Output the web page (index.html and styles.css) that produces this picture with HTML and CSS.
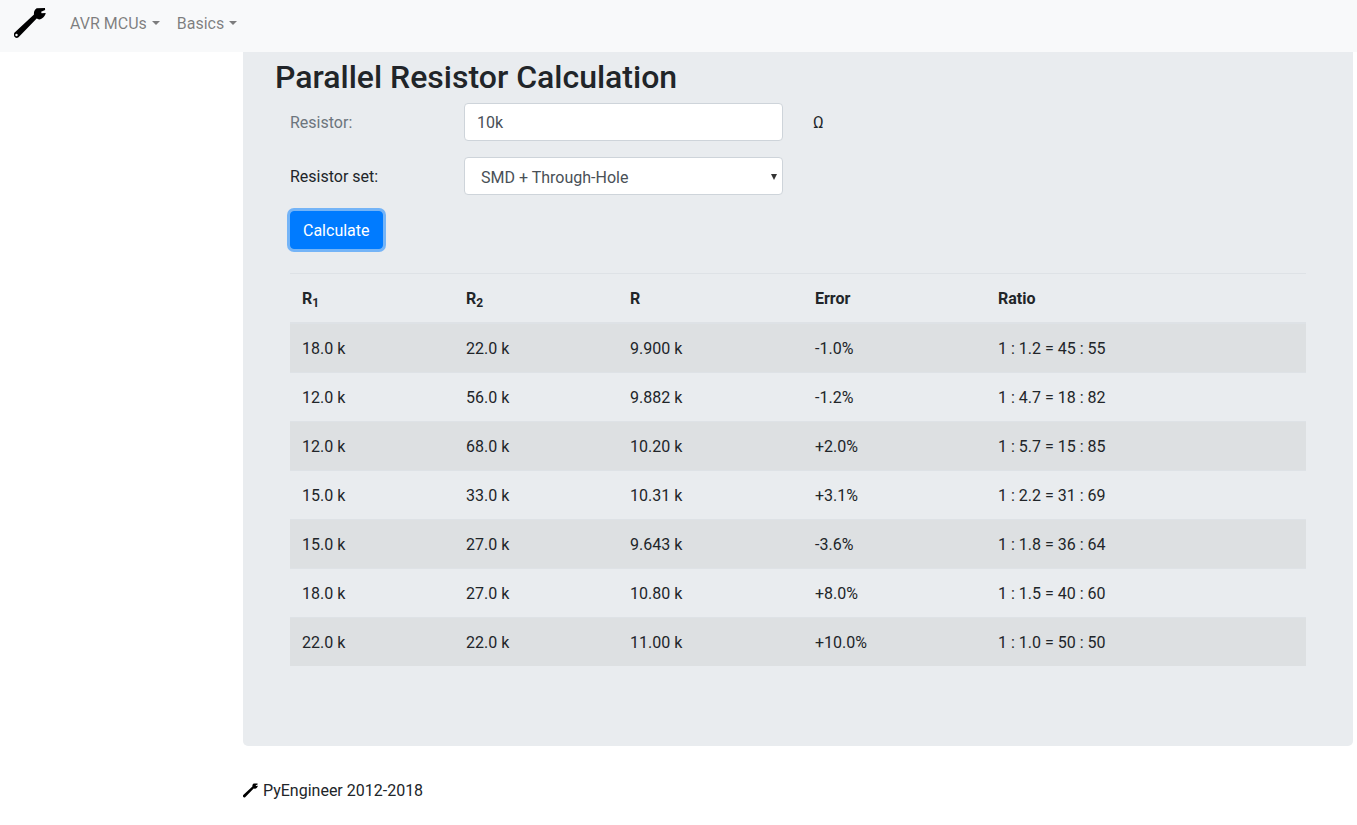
FILE: index.html
```html
<!DOCTYPE html>
<html>
<head>
    <meta charset="utf-8">
    <title>Parallel Resistor Calculation</title>
    <link rel="stylesheet" href="styles.css">
</head>
<body>
    <nav class="navbar">
        <a class="brand" href="#">
            <svg class="wrench" viewBox="0 0 34 32" width="34" height="32">
                <path class="wrench-fill" fill-rule="evenodd" d="M.4 25.700 20 7.600c-.4-2.600.6-5 2.700-6.300L31 1l.1 2-4 1.700.5 1.500 4.100-.2c-.5 3.100-3.200 6-6.600 6.500l-2.400-1L4.500 30.200C3.600 31 2.400 31.200 1.300 30.600-.2 29.700-.5 27 .4 25.700ZM2.500 29.200a1.200 1.200 0 1 0 0-2.400 1.200 1.200 0 0 0 0 2.400Z"/>
            </svg>
        </a>
        <ul class="nav-list">
            <li><a class="nav-link" href="#">AVR MCUs<span class="caret"></span></a></li>
            <li><a class="nav-link" href="#">Basics<span class="caret"></span></a></li>
        </ul>
    </nav>

    <main class="jumbotron">
        <h2>Parallel Resistor Calculation</h2>

        <form class="calc-form">
            <div class="form-row">
                <label class="muted" for="resistor">Resistor:</label>
                <input type="text" id="resistor" class="form-control" value="10k">
                <span class="unit">Ω</span>
            </div>
            <div class="form-row">
                <label for="resistor-set">Resistor set:</label>
                <div class="select-box" id="resistor-set">SMD + Through-Hole<span class="select-arrow"></span></div>
            </div>
            <button type="button" class="btn">Calculate</button>
        </form>

        <table>
            <thead>
                <tr>
                    <th class="col-1">R<sub>1</sub></th>
                    <th class="col-2">R<sub>2</sub></th>
                    <th class="col-3">R</th>
                    <th class="col-4">Error</th>
                    <th>Ratio</th>
                </tr>
            </thead>
            <tbody>
                <tr><td>18.0 k</td><td>22.0 k</td><td>9.900 k</td><td>-1.0%</td><td>1 : 1.2 = 45 : 55</td></tr>
                <tr><td>12.0 k</td><td>56.0 k</td><td>9.882 k</td><td>-1.2%</td><td>1 : 4.7 = 18 : 82</td></tr>
                <tr><td>12.0 k</td><td>68.0 k</td><td>10.20 k</td><td>+2.0%</td><td>1 : 5.7 = 15 : 85</td></tr>
                <tr><td>15.0 k</td><td>33.0 k</td><td>10.31 k</td><td>+3.1%</td><td>1 : 2.2 = 31 : 69</td></tr>
                <tr><td>15.0 k</td><td>27.0 k</td><td>9.643 k</td><td>-3.6%</td><td>1 : 1.8 = 36 : 64</td></tr>
                <tr><td>18.0 k</td><td>27.0 k</td><td>10.80 k</td><td>+8.0%</td><td>1 : 1.5 = 40 : 60</td></tr>
                <tr><td>22.0 k</td><td>22.0 k</td><td>11.00 k</td><td>+10.0%</td><td>1 : 1.0 = 50 : 50</td></tr>
            </tbody>
        </table>
    </main>

    <footer class="footer">
        <svg class="wrench" viewBox="0 0 34 32" width="16" height="15">
            <path class="wrench-fill" d="M.4 25.700 20 7.600c-.4-2.600.6-5 2.700-6.300L31 1l.1 2-4 1.700.5 1.500 4.100-.2c-.5 3.100-3.200 6-6.600 6.500l-2.400-1L4.500 30.200C3.600 31 2.400 31.200 1.300 30.600-.2 29.700-.5 27 .4 25.700Z"/>
        </svg>
        PyEngineer 2012-2018
    </footer>
</body>
</html>
```

FILE: styles.css
```css
* {
    box-sizing: border-box;
}

body {
    margin: 0;
    font-family: Roboto, "Liberation Sans", sans-serif;
    font-size: 16px;
    line-height: 1.5;
    color: #212529;
    background-color: #fff;
}

a {
    text-decoration: none;
}

/* navbar */
.navbar {
    display: flex;
    align-items: center;
    height: 52px;
    padding: 0 16px 4px 14px;
    background-color: #f8f9fa;
}

.brand {
    display: flex;
    margin-right: 14px;
    margin-top: -2px;
}

.wrench-fill {
    fill: #000;
}

.nav-list {
    display: flex;
    margin: 0;
    padding: 0;
    list-style: none;
}

.nav-link {
    display: block;
    padding: 8px;
    color: rgba(0, 0, 0, .5);
}

.caret {
    display: inline-block;
    margin: 0 1px 0 5px;
    vertical-align: 4px;
    border-top: 4px solid;
    border-right: 4px solid transparent;
    border-left: 4px solid transparent;
}

/* main panel */
.jumbotron {
    height: 694px;
    margin: 0 4px 0 243px;
    padding: 6px 47px 0;
    background-color: #e9ecef;
    border-radius: 0 0 5px 5px;
}

h2 {
    margin: 0 0 6px -15px;
    font-size: 32px;
    font-weight: 500;
    line-height: 39px;
}

/* form */
.form-row {
    display: flex;
    align-items: center;
    height: 38px;
    margin-bottom: 16px;
}

.form-row label {
    width: 174px;
    padding-top: 2px;
}

.muted {
    color: #6c757d;
}

.form-control,
.select-box {
    width: 319px;
    height: 38px;
    padding: 6px 12px;
    font-family: inherit;
    font-size: 16px;
    line-height: 24px;
    color: #495057;
    background-color: #fff;
    border: 1px solid #ced4da;
    border-radius: 4px;
}

.select-box {
    position: relative;
    padding: 8px 12px 4px 16px;
}

.select-arrow {
    position: absolute;
    top: 16px;
    right: 5px;
    border-top: 6px solid #333;
    border-right: 3px solid transparent;
    border-left: 3px solid transparent;
}

.unit {
    margin-left: 30px;
    padding-top: 2px;
}

.btn {
    display: block;
    height: 38px;
    margin-bottom: 24px;
    padding: 7px 12px 5px;
    font-family: inherit;
    font-size: 16px;
    line-height: 24px;
    color: #fff;
    background-color: #007bff;
    border: 1px solid #007bff;
    border-radius: 4px;
    box-shadow: 0 0 0 3px rgba(0, 123, 255, .5);
}

/* table */
table {
    width: 100%;
    border-collapse: collapse;
}

th,
td {
    padding: 13px 12px 11px;
    text-align: left;
    border-top: 1px solid #dee2e6;
}

th {
    font-weight: 700;
    border-bottom: 2px solid #dee2e6;
}

tbody tr:nth-child(odd) {
    background-color: rgba(0, 0, 0, .05);
}

sub {
    font-size: 75%;
    line-height: 0;
    position: relative;
    bottom: -.25em;
    vertical-align: baseline;
}

.col-1,
.col-2 {
    width: 164px;
}

.col-3 {
    width: 185px;
}

.col-4 {
    width: 183px;
}

/* footer */
.footer {
    margin: 33px 0 0 243px;
    line-height: 24px;
}

.footer .wrench {
    vertical-align: -2px;
}
```
